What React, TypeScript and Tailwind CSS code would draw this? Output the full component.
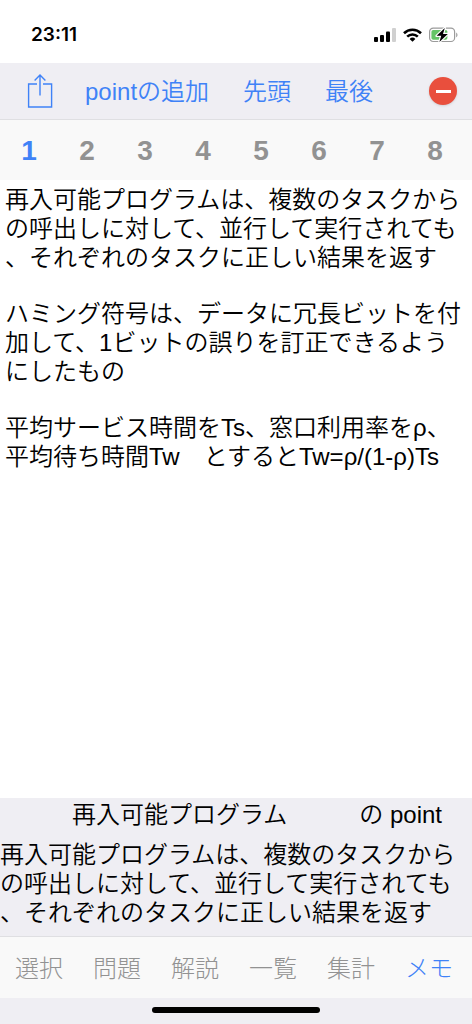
import React, { useState } from 'react';

const PAGES = ['1', '2', '3', '4', '5', '6', '7', '8'];
const TABS = ['選択', '問題', '解説', '一覧', '集計', 'メモ'];

const POINT = '再入可能プログラムは、複数のタスクからの呼出しに対して、並行して実行されても、それぞれのタスクに正しい結果を返す';

const MEMO = [
  POINT,
  'ハミング符号は、データに冗長ビットを付加して、1ビットの誤りを訂正できるようにしたもの',
  '平均サービス時間をTs、窓口利用率をρ、平均待ち時間Tw　とするとTw=ρ/(1-ρ)Ts',
];

const StatusBar: React.FC = () => (
  <div className="h-[63px] pt-1.5 pl-[31px] pr-[14px] flex items-center justify-between bg-white">
    <span className="font-[Inter,sans-serif] text-[19px] leading-6 font-semibold">23:11</span>
    <div className="flex items-center gap-[7px]">
      {/* Signal */}
      <svg width="22" height="14" viewBox="0 0 22 14" aria-hidden="true">
        <rect x="0" y="9" width="4" height="5" rx="1" />
        <rect x="6" y="7" width="4" height="7" rx="1" />
        <rect x="12" y="3.5" width="4" height="10.5" rx="1" />
        <rect x="18" y="0" width="4" height="14" rx="1" fill="#d0d0d0" />
      </svg>
      {/* Wifi */}
      <svg width="19" height="14" viewBox="0 0 19 14" aria-hidden="true">
        <g fill="none" stroke="#000" strokeWidth="2.6">
          <path d="M1 5.2a12.2 12.2 0 0 1 17 0" />
          <path d="M4.2 8.6a7.6 7.6 0 0 1 10.6 0" />
        </g>
        <path d="M9.5 13.8 6.6 11a4.2 4.2 0 0 1 5.8 0z" />
      </svg>
      {/* Battery */}
      <svg width="29" height="16" viewBox="0 0 29 16" aria-hidden="true">
        <rect x="0.6" y="1.1" width="25" height="13.4" rx="3.6" fill="none" stroke="#9b9b9b" strokeWidth="1.2" />
        <path d="M27.2 5.4c1.7.7 1.7 4.1 0 4.8z" fill="#9b9b9b" />
        <rect x="2.4" y="2.9" width="16" height="9.8" rx="1.8" fill="#65c466" />
        <path
          d="M15.8 1 7.6 8.8h4.6L10.4 15l8.4-8h-4.8z"
          stroke="#fff"
          strokeWidth="2.4"
          strokeLinejoin="round"
          paintOrder="stroke"
        />
      </svg>
    </div>
  </div>
);

const ShareIcon: React.FC = () => (
  <svg width="26" height="34" viewBox="0 0 26 34" fill="none" stroke="#3f82f7" strokeWidth="1.4" aria-hidden="true">
    <path d="M10 10H1.6v23h23V10H16" />
    <path d="M13 21.5V1.4M7.6 6.4 13 1l5.4 5.4" />
  </svg>
);

const App: React.FC = () => {
  const [page, setPage] = useState('1');
  const [tab, setTab] = useState('メモ');

  return (
    <div className="min-h-screen flex flex-col bg-white text-black text-2xl font-[350] font-['Liberation_Sans','Noto_Sans_CJK_JP',sans-serif]">
      <StatusBar />

      {/* Toolbar */}
      <header className="h-[57px] pl-[27px] pr-[15px] flex items-center gap-8 bg-[#efeef3] border-b border-[#dfdfe2] text-[#3f82f7]">
        <button aria-label="共有" className="shrink-0">
          <ShareIcon />
        </button>
        <div className="pt-0.5 flex gap-[34px] whitespace-nowrap">
          <button>pointの追加</button>
          <button>先頭</button>
          <button>最後</button>
        </div>
        <button aria-label="削除" className="ml-auto shrink-0 size-7 rounded-full bg-[#e94f3d] shadow-sm flex items-center justify-center">
          <span className="w-[15px] h-[3px] bg-white" />
        </button>
      </header>

      {/* Page numbers */}
      <nav className="h-[60px] pt-0.5 pr-2 flex items-center bg-[#f9f9f9]">
        {PAGES.map((p) => (
          <button
            key={p}
            onClick={() => setPage(p)}
            className={`flex-1 text-[28px] font-bold ${p === page ? 'text-[#3f82f7]' : 'text-[#929292]'}`}
          >
            {p}
          </button>
        ))}
      </nav>

      {/* Memo */}
      <main className="flex-1 px-[5px] py-[5px] flex flex-col gap-[27px] leading-[29px] [line-break:anywhere]">
        {MEMO.map((text) => (
          <p key={text}>{text}</p>
        ))}
      </main>

      {/* Selected point */}
      <section className="bg-[#efeef3] pb-[9px]">
        <h2 className="h-[42px] pl-[72px] pt-0.5 flex gap-[72px] leading-[29px] whitespace-nowrap">
          <span>再入可能プログラム</span>
          <span>の point</span>
        </h2>
        <p className="leading-[29px] [line-break:anywhere]">{POINT}</p>
      </section>

      {/* Tabs */}
      <nav className="h-[62px] pt-0.5 pr-1 flex items-center bg-[#f9f9f9] border-t border-[#dfdfe2] font-light">
        {TABS.map((t) => (
          <button
            key={t}
            onClick={() => setTab(t)}
            className={`flex-1 ${t === tab ? 'text-[#3f82f7]' : 'text-[#929292]'}`}
          >
            {t}
          </button>
        ))}
      </nav>

      <footer className="h-[26px] pb-0.5 flex items-center justify-center bg-[#efeef3]">
        <div className="w-42 h-1.5 rounded-full bg-black" />
      </footer>
    </div>
  );
};

export default App;
